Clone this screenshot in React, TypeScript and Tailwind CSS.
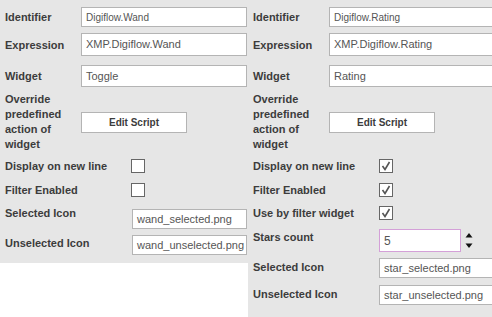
import React from "react";

function Field({ className, children }: { className: string; children: React.ReactNode }) {
  return (
    <div
      className={
        "bg-white border flex items-center pl-[4px] text-[#555555] whitespace-nowrap overflow-hidden shrink-0 " +
        className
      }
    >
      {children}
    </div>
  );
}

function Label({ className, children }: { className: string; children: React.ReactNode }) {
  return (
    <div className={"pl-[5px] shrink-0 text-[11px] font-bold text-[#3c3c3c] leading-[14px] " + className}>
      {children}
    </div>
  );
}

function Check({ checked }: { checked: boolean }) {
  return (
    <div className="w-[14px] h-[14px] bg-white border border-[#666666] shrink-0 flex items-center justify-center">
      {checked && (
        <svg width="12" height="12" viewBox="0 0 12 12">
          <polyline points="2.5,6 5,9.5 9.5,2" fill="none" stroke="#555555" strokeWidth="1.6" />
        </svg>
      )}
    </div>
  );
}

function TopRows({ id, expr, widget, idSize }: { id: string; expr: string; widget: string; idSize: string }) {
  return (
    <>
      <div className="flex items-center h-[20px]">
        <Label className="w-[81px]">Identifier</Label>
        <Field className={"w-[166px] h-[20px] border-[#b4b4b4] " + idSize}>{id}</Field>
      </div>
      <div className="flex items-center h-[23px] mt-[6px]">
        <Label className="w-[81px]">Expression</Label>
        <Field className="w-[166px] h-[23px] border-[#b4b4b4] text-[11px] pl-[2px]">{expr}</Field>
      </div>
      <div className="flex items-center h-[22px] mt-[9px]">
        <Label className="w-[81px]">Widget</Label>
        <Field className="w-[166px] h-[22px] border-[#b4b4b4] text-[11px]">{widget}</Field>
      </div>
      <div className="flex items-center h-[60px] mt-[5px]">
        <Label className="w-[81px] leading-[15px]">
          Override
          <br />
          predefined
          <br />
          action of
          <br />
          widget
        </Label>
        <div className="w-[106px] h-[21px] bg-white border border-[#b4b4b4] flex items-center justify-center text-[10px] font-bold text-[#3c3c3c] shrink-0">
          Edit Script
        </div>
      </div>
    </>
  );
}

export default function App() {
  return (
    <div className="w-[492px] h-[317px] overflow-hidden bg-white flex items-start font-['Liberation_Sans',Arial,sans-serif]">
      <div className="w-[248px] h-[263px] bg-[#e6e6e6] shrink-0 pt-[7px] overflow-hidden">
        <TopRows id="Digiflow.Wand" expr="XMP.Digiflow.Wand" widget="Toggle" idSize="text-[10px]" />
        <div className="flex items-center h-[14px] mt-[7px]">
          <Label className="w-[131px]">Display on new line</Label>
          <Check checked={false} />
        </div>
        <div className="flex items-center h-[14px] mt-[10px]">
          <Label className="w-[131px]">Filter Enabled</Label>
          <Check checked={false} />
        </div>
        <div className="flex items-start h-[20px] mt-[12px]">
          <Label className="w-[132px] -mt-[3px]">Selected Icon</Label>
          <Field className="w-[115px] h-[20px] border-[#b4b4b4] text-[11px] pl-[3px]">wand_selected.png</Field>
        </div>
        <div className="flex items-start h-[20px] mt-[6px]">
          <Label className="w-[132px] mt-[1px]">Unselected Icon</Label>
          <Field className="w-[115px] h-[20px] border-[#b4b4b4] text-[11px] pl-[3px]">wand_unselected.png</Field>
        </div>
      </div>
      <div className="w-[244px] h-[317px] bg-[#e6e6e6] shrink-0 pt-[7px] overflow-hidden">
        <TopRows id="Digiflow.Rating" expr="XMP.Digiflow.Rating" widget="Rating" idSize="text-[10px]" />
        <div className="flex items-center h-[14px] mt-[7px]">
          <Label className="w-[131px]">Display on new line</Label>
          <Check checked={true} />
        </div>
        <div className="flex items-center h-[14px] mt-[10px]">
          <Label className="w-[131px]">Filter Enabled</Label>
          <Check checked={true} />
        </div>
        <div className="flex items-center h-[14px] mt-[9px]">
          <Label className="w-[131px]">Use by filter widget</Label>
          <Check checked={true} />
        </div>
        <div className="flex items-start h-[23px] mt-[9px]">
          <Label className="w-[131px] mt-[1px]">Stars count</Label>
          <Field className="w-[82px] h-[23px] border-[#d4a0d8] text-[12px]">5</Field>
          <div className="ml-[4px] w-[8px] h-[23px] flex flex-col items-center shrink-0">
            <svg width="8" height="23" viewBox="0 0 8 23">
              <polygon points="4,4 7.5,8.5 0.5,8.5" fill="#111111" />
              <polygon points="0.5,14.5 7.5,14.5 4,19" fill="#111111" />
            </svg>
          </div>
        </div>
        <div className="flex items-start h-[20px] mt-[6px]">
          <Label className="w-[131px] mt-[2px]">Selected Icon</Label>
          <Field className="w-[115px] h-[20px] border-[#b4b4b4] text-[11px]">star_selected.png</Field>
        </div>
        <div className="flex items-start h-[20px] mt-[7px]">
          <Label className="w-[131px] mt-[2px]">Unselected Icon</Label>
          <Field className="w-[115px] h-[20px] border-[#b4b4b4] text-[11px]">star_unselected.png</Field>
        </div>
      </div>
    </div>
  );
}
